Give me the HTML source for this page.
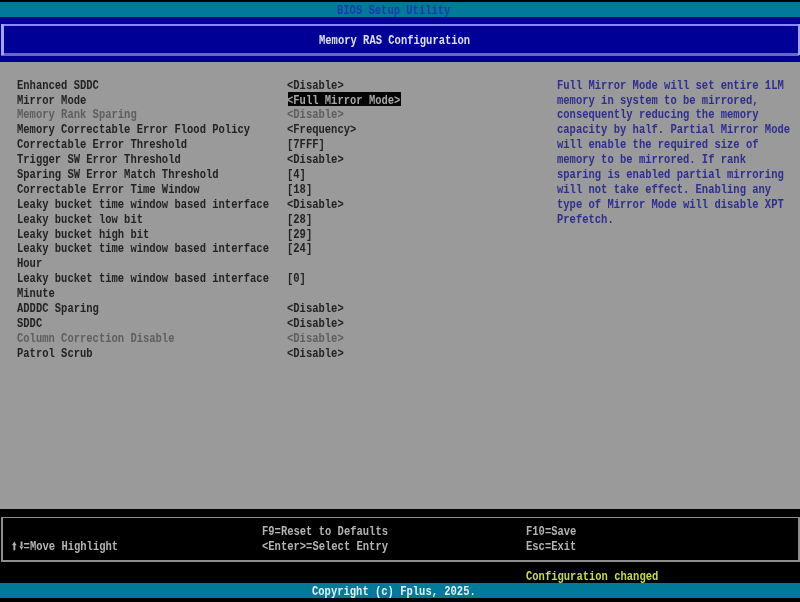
<!DOCTYPE html>
<html><head><meta charset="utf-8"><style>
html,body{margin:0;padding:0;width:800px;height:602px;overflow:hidden;background:#000;}
body{position:relative;}
.box{position:absolute;}
.t{position:absolute;white-space:pre;font-family:"Liberation Mono",monospace;font-weight:bold;font-size:13.66px;line-height:15px;transform:scaleX(0.7686);transform-origin:0 0;filter:blur(0.4px);}
</style></head><body>
<div class="box" style="left:0;top:2px;width:800px;height:15px;background:#007a98"></div>
<div class="box" style="left:0;top:17px;width:800px;height:45px;background:#000096"></div>
<div class="box" style="left:1.25px;top:24px;width:798px;height:1.75px;background:#8888ff"></div>
<div class="box" style="left:1.25px;top:53px;width:798px;height:2.5px;background:#6868c8"></div>
<div class="box" style="left:1.25px;top:24px;width:2.5px;height:31px;background:#a4a4f4"></div>
<div class="box" style="left:798px;top:24px;width:2px;height:31px;background:#a4a4f4"></div>
<div class="box" style="left:0;top:62px;width:800px;height:447px;background:#9a9a9a"></div>
<div class="box" style="left:1.25px;top:516.5px;width:798px;height:1.5px;background:#8e8e8e"></div>
<div class="box" style="left:1.25px;top:560px;width:798px;height:1.5px;background:#8e8e8e"></div>
<div class="box" style="left:1.25px;top:516.5px;width:1.75px;height:45px;background:#8e8e8e"></div>
<div class="box" style="left:798px;top:516.5px;width:1.5px;height:45px;background:#8e8e8e"></div>
<div class="box" style="left:0;top:583px;width:800px;height:15px;background:#007a98"></div>
<div class="t" style="left:16.60px;top:77.62px;color:#222222;">Enhanced SDDC</div>
<div class="t" style="left:287.10px;top:77.62px;color:#222222;">&lt;Disable&gt;</div>
<div class="t" style="left:16.60px;top:92.51px;color:#222222;">Mirror Mode</div>
<div class="box" style="left:288px;top:92px;width:113px;height:14px;background:#050505"></div>
<div class="t" style="left:287.10px;top:92.51px;color:#a8a8a8;">&lt;Full Mirror Mode&gt;</div>
<div class="t" style="left:16.60px;top:107.40px;color:#5e5e5e;">Memory Rank Sparing</div>
<div class="t" style="left:287.10px;top:107.40px;color:#5e5e5e;">&lt;Disable&gt;</div>
<div class="t" style="left:16.60px;top:122.29px;color:#222222;">Memory Correctable Error Flood Policy</div>
<div class="t" style="left:287.10px;top:122.29px;color:#222222;">&lt;Frequency&gt;</div>
<div class="t" style="left:16.60px;top:137.18px;color:#222222;">Correctable Error Threshold</div>
<div class="t" style="left:287.10px;top:137.18px;color:#222222;">[7FFF]</div>
<div class="t" style="left:16.60px;top:152.07px;color:#222222;">Trigger SW Error Threshold</div>
<div class="t" style="left:287.10px;top:152.07px;color:#222222;">&lt;Disable&gt;</div>
<div class="t" style="left:16.60px;top:166.96px;color:#222222;">Sparing SW Error Match Threshold</div>
<div class="t" style="left:287.10px;top:166.96px;color:#222222;">[4]</div>
<div class="t" style="left:16.60px;top:181.85px;color:#222222;">Correctable Error Time Window</div>
<div class="t" style="left:287.10px;top:181.85px;color:#222222;">[18]</div>
<div class="t" style="left:16.60px;top:196.74px;color:#222222;">Leaky bucket time window based interface</div>
<div class="t" style="left:287.10px;top:196.74px;color:#222222;">&lt;Disable&gt;</div>
<div class="t" style="left:16.60px;top:211.63px;color:#222222;">Leaky bucket low bit</div>
<div class="t" style="left:287.10px;top:211.63px;color:#222222;">[28]</div>
<div class="t" style="left:16.60px;top:226.52px;color:#222222;">Leaky bucket high bit</div>
<div class="t" style="left:287.10px;top:226.52px;color:#222222;">[29]</div>
<div class="t" style="left:16.60px;top:241.41px;color:#222222;">Leaky bucket time window based interface</div>
<div class="t" style="left:287.10px;top:241.41px;color:#222222;">[24]</div>
<div class="t" style="left:16.60px;top:256.30px;color:#222222;">Hour</div>
<div class="t" style="left:16.60px;top:271.19px;color:#222222;">Leaky bucket time window based interface</div>
<div class="t" style="left:287.10px;top:271.19px;color:#222222;">[0]</div>
<div class="t" style="left:16.60px;top:286.08px;color:#222222;">Minute</div>
<div class="t" style="left:16.60px;top:300.97px;color:#222222;">ADDDC Sparing</div>
<div class="t" style="left:287.10px;top:300.97px;color:#222222;">&lt;Disable&gt;</div>
<div class="t" style="left:16.60px;top:315.86px;color:#222222;">SDDC</div>
<div class="t" style="left:287.10px;top:315.86px;color:#222222;">&lt;Disable&gt;</div>
<div class="t" style="left:16.60px;top:330.75px;color:#5e5e5e;">Column Correction Disable</div>
<div class="t" style="left:287.10px;top:330.75px;color:#5e5e5e;">&lt;Disable&gt;</div>
<div class="t" style="left:16.60px;top:345.64px;color:#222222;">Patrol Scrub</div>
<div class="t" style="left:287.10px;top:345.64px;color:#222222;">&lt;Disable&gt;</div>
<div class="t" style="left:556.60px;top:77.62px;color:#2e2e90;">Full Mirror Mode will set entire 1LM</div>
<div class="t" style="left:556.60px;top:92.51px;color:#2e2e90;">memory in system to be mirrored,</div>
<div class="t" style="left:556.60px;top:107.40px;color:#2e2e90;">consequently reducing the memory</div>
<div class="t" style="left:556.60px;top:122.29px;color:#2e2e90;">capacity by half. Partial Mirror Mode</div>
<div class="t" style="left:556.60px;top:137.18px;color:#2e2e90;">will enable the required size of</div>
<div class="t" style="left:556.60px;top:152.07px;color:#2e2e90;">memory to be mirrored. If rank</div>
<div class="t" style="left:556.60px;top:166.96px;color:#2e2e90;">sparing is enabled partial mirroring</div>
<div class="t" style="left:556.60px;top:181.85px;color:#2e2e90;">will not take effect. Enabling any</div>
<div class="t" style="left:556.60px;top:196.74px;color:#2e2e90;">type of Mirror Mode will disable XPT</div>
<div class="t" style="left:556.60px;top:211.63px;color:#2e2e90;">Prefetch.</div>
<div class="t" style="left:336.60px;top:3.17px;color:#1c3cae;">BIOS Setup Utility</div>
<div class="t" style="left:318.60px;top:32.95px;color:#e0e0f8;">Memory RAS Configuration</div>
<div class="t" style="left:261.90px;top:524.32px;color:#b4b4b4;">F9=Reset to Defaults</div>
<div class="t" style="left:525.50px;top:524.32px;color:#b4b4b4;">F10=Save</div>
<div class="t" style="left:11.30px;top:539.21px;color:#b4b4b4;">  =Move Highlight</div>
<svg class="box" style="left:0;top:530px" width="40" height="30" viewBox="0 530 40 30"><path d="M12 545.2 L14.3 541.5 L16.6 545.2 Z M13.4 544.5 h1.9 v5.8 h-1.9 Z M19.4 546 L21.5 550 L23.6 546 Z M20.6 541.5 h1.9 v5 h-1.9 Z" fill="#b4b4b4"/></svg>
<div class="t" style="left:261.90px;top:539.21px;color:#b4b4b4;">&lt;Enter&gt;=Select Entry</div>
<div class="t" style="left:525.50px;top:539.21px;color:#b4b4b4;">Esc=Exit</div>
<div class="t" style="left:525.50px;top:568.99px;color:#cad65c;">Configuration changed</div>
<div class="t" style="left:312.10px;top:583.88px;color:#e6f0f0;">Copyright (c) Fplus, 2025.</div>
</body></html>
